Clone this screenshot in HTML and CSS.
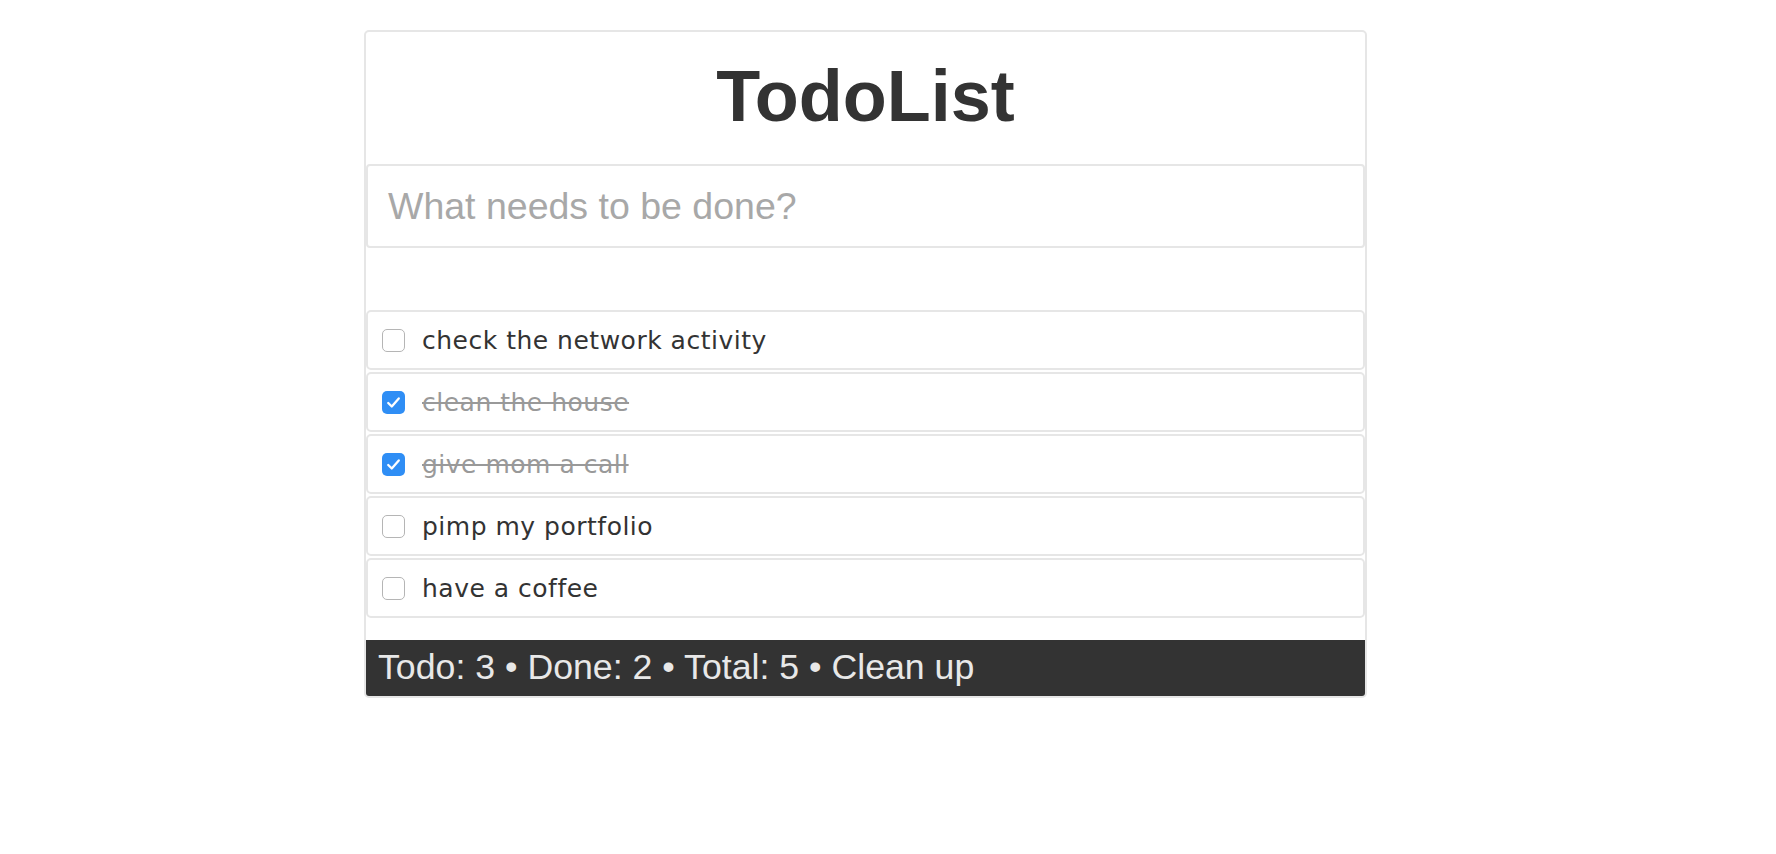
FILE: index.html
```html
<!DOCTYPE html>
<html>
<head>
<meta charset="utf-8">
<title>TodoList</title>
<link rel="stylesheet" href="styles.css">
</head>
<body>
<div class="app">
  <header class="head"><h1 class="title">TodoList</h1></header>
  <div class="new-todo">What needs to be done?</div>
  <ul class="list">
    <li class="item"><span class="box"></span><span class="label">check the network activity</span></li>
    <li class="item done"><span class="box checked"><svg viewBox="0 0 24 24" width="23" height="23"><path d="M6.5 12.5 L10.2 16.2 L17.5 7.8" fill="none" stroke="#fff" stroke-width="2.4" stroke-linecap="round" stroke-linejoin="round"/></svg></span><span class="label">clean the house</span></li>
    <li class="item done"><span class="box checked"><svg viewBox="0 0 24 24" width="23" height="23"><path d="M6.5 12.5 L10.2 16.2 L17.5 7.8" fill="none" stroke="#fff" stroke-width="2.4" stroke-linecap="round" stroke-linejoin="round"/></svg></span><span class="label">give mom a call</span></li>
    <li class="item"><span class="box"></span><span class="label">pimp my portfolio</span></li>
    <li class="item"><span class="box"></span><span class="label">have a coffee</span></li>
  </ul>
  <footer class="foot">Todo: 3 • Done: 2 • Total: 5 • Clean up</footer>
</div>
</body>
</html>
```
FILE: styles.css
```css
html, body {
  margin: 0;
  padding: 0;
  background: #fff;
}
body {
  font-family: "Liberation Sans", Arial, sans-serif;
  color: #333;
}
.app {
  box-sizing: border-box;
  width: 1003px;
  margin: 30px 0 0 364px;
  border: 2px solid #e6e6e6;
  border-radius: 5px;
  display: flex;
  flex-direction: column;
  overflow: hidden;
}
.head {
  height: 132px;
  box-sizing: border-box;
  padding-top: 28px;
}
.title {
  margin: 0;
  text-align: center;
  font-size: 72px;
  line-height: 72px;
  font-weight: bold;
  color: #333;
}
.new-todo {
  box-sizing: border-box;
  height: 84px;
  border: 2px solid #e6e6e6;
  border-radius: 4px;
  padding: 0 0 0 20px;
  display: flex;
  align-items: center;
  font-size: 37.5px;
  color: #a8a8a8;
}
.list {
  list-style: none;
  margin: 62px 0 0 0;
  padding: 0;
  display: flex;
  flex-direction: column;
  gap: 2px;
}
.item {
  box-sizing: border-box;
  height: 60px;
  border: 2px solid #e6e6e6;
  border-radius: 5px;
  display: flex;
  align-items: center;
  padding-left: 14px;
  font-family: "DejaVu Sans", Verdana, sans-serif;
  font-size: 25px;
  letter-spacing: 0.5px;
  color: #333;
}
.box {
  box-sizing: border-box;
  width: 23px;
  height: 23px;
  border: 1.5px solid #b5b5b5;
  border-radius: 5px;
  background: #fff;
  margin-right: 17px;
  flex: none;
  display: flex;
}
.box.checked {
  border: none;
  background: #2f8ef5;
}
.done .label {
  color: #999;
  text-decoration: line-through;
}
.foot {
  margin-top: 22px;
  background: #333;
  color: #e8e8e8;
  font-size: 35.7px;
  padding: 7px 14px 8px 12px;
  line-height: 41px;
}
```
